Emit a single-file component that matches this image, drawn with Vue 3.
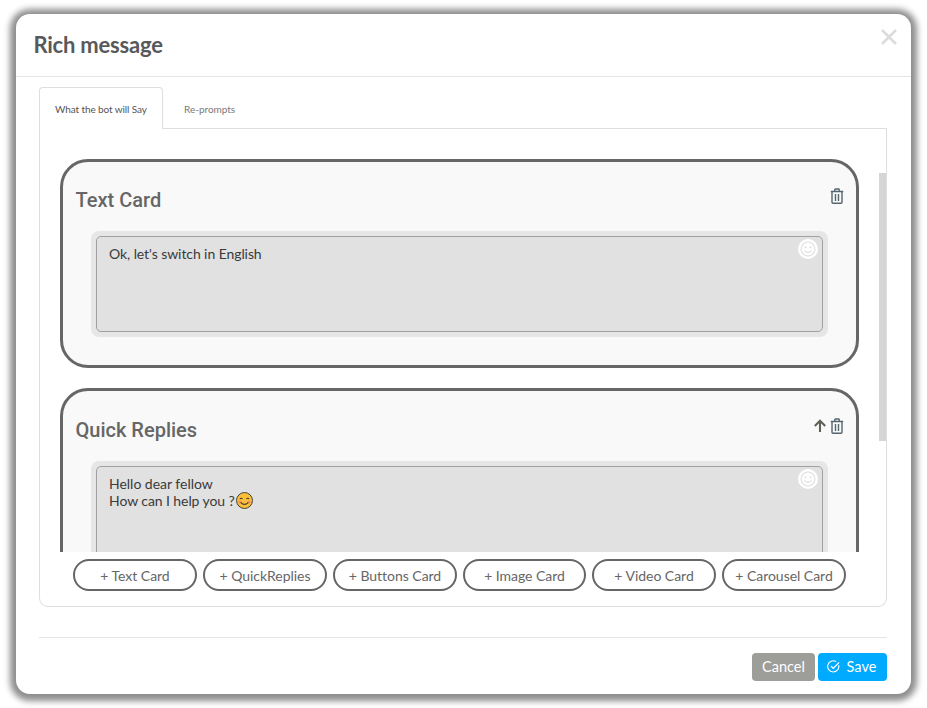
<script setup>
const cards = [
  { title: 'Text Card', lines: ["Ok, let's switch in English"], up: false, emoji: false },
  { title: 'Quick Replies', lines: ['Hello dear fellow', 'How can I help you ?'], up: true, emoji: true }
]
const addButtons = ['+ Text Card', '+ QuickReplies', '+ Buttons Card', '+ Image Card', '+ Video Card', '+ Carousel Card']
</script>

<template>
  <div class="page">
    <div class="modal">
      <header class="head">
        <h1 class="title">Rich message</h1>
        <svg class="close" viewBox="0 0 16 16" width="16" height="16"><path d="M1 1 15 15M15 1 1 15" stroke="#dcdcdc" stroke-width="2.6" fill="none"/></svg>
      </header>
      <div class="body">
        <div class="tabs">
          <div class="tab active">What the bot will Say</div>
          <div class="tab">Re-prompts</div>
        </div>
        <div class="panel">
          <div class="scroll">
            <div class="thumb"></div>
            <section v-for="c in cards" :key="c.title" class="card">
              <div class="card-head">
                <h2 class="card-title">{{ c.title }}</h2>
                <div class="card-actions">
                  <svg v-if="c.up" viewBox="0 0 14 14" width="14" height="14"><path d="M7 13V2M1.8 7 7 1.8 12.2 7" stroke="#5f6058" stroke-width="2.1" fill="none"/></svg>
                  <svg viewBox="0 0 14 16" width="14" height="16"><path d="M2 4v10.2c0 .6.4 1 1 1h8c.6 0 1-.4 1-1V4M.8 3.5h12.4M4.8 3.3V1.6c0-.4.2-.6.6-.6h3.2c.4 0 .6.2.6.6v1.7M5.5 6v7M8.5 6v7" stroke="#556570" stroke-width="1.4" fill="none"/></svg>
                </div>
              </div>
              <div class="ring">
                <div class="area">
                  <div v-for="(l, i) in c.lines" :key="i" class="line">{{ l }}<svg v-if="c.emoji && i === 1" class="emoji" viewBox="0 0 16 16" width="17" height="17"><circle cx="8" cy="8" r="7.5" fill="#fbbf3a" stroke="#3d3a33" stroke-width=".9"/><circle cx="3.6" cy="9.4" r="1.5" fill="#f3916b"/><circle cx="12.4" cy="9.4" r="1.5" fill="#f3916b"/><path d="M3.6 6.6q1.3-1.4 2.6 0M9.8 6.6q1.3-1.4 2.6 0" stroke="#3d3a33" stroke-width="1" fill="none"/><path d="M4.4 9.8q3.6 3.8 7.2 0" stroke="#3d3a33" stroke-width="1.1" fill="none"/></svg></div>
                  <span class="smile">
                    <svg viewBox="0 0 16 16" width="16" height="16"><circle cx="8" cy="8" r="7" fill="none" stroke="#dedede" stroke-width="1.1"/><circle cx="5.6" cy="6.2" r=".9" fill="#dedede"/><circle cx="10.4" cy="6.2" r=".9" fill="#dedede"/><path d="M4.4 9.6q3.6 3.6 7.2 0" stroke="#dedede" stroke-width="1.1" fill="none"/></svg>
                  </span>
                </div>
              </div>
            </section>
          </div>
          <div class="adds">
            <button v-for="b in addButtons" :key="b" class="add">{{ b }}</button>
          </div>
        </div>
        <footer class="foot">
          <button class="btn cancel">Cancel</button>
          <button class="btn save">
            <svg viewBox="0 0 14 14" width="13" height="13"><path d="M12.6 5.6A6 6 0 1 1 9.8 1.7" stroke="#fff" stroke-width="1.2" fill="none"/><path d="M4.2 6.4 6.8 9 13 2.6" stroke="#fff" stroke-width="1.4" fill="none"/></svg>
            Save
          </button>
        </footer>
      </div>
    </div>
  </div>
</template>

<style scoped>
.page {
  width: 927px;
  height: 708px;
  padding: 14px 16px;
  box-sizing: border-box;
  background: #fff;
  font-family: Lato, sans-serif;
  overflow: hidden;
}
.modal {
  width: 895px;
  height: 680px;
  background: #fff;
  border-radius: 14px;
  box-shadow: 0 1px 6px 6px #8e8e8e;
  display: flex;
  flex-direction: column;
}
.head {
  height: 63px;
  box-sizing: border-box;
  border-bottom: 1px solid #e5e5e5;
  padding: 0 14px 0 18px;
  display: flex;
  justify-content: space-between;
  flex: none;
}
.title {
  margin: 17px 0 0 -0.6px;
  font-size: 22px;
  line-height: 28px;
  font-weight: 700;
  color: #58595b;
  letter-spacing: -0.2px;
}
.close { margin-top: 15px; }
.body {
  padding: 10px 24px 0 23px;
  display: flex;
  flex-direction: column;
  flex: 1;
  min-height: 0;
}
.tabs {
  display: flex;
  height: 42px;
  border-bottom: 1px solid #dedede;
  box-sizing: border-box;
  flex: none;
}
.tab {
  height: 42px;
  box-sizing: border-box;
  padding: 14px 21px 0;
  font-size: 10px;
  line-height: 17px;
  color: #7a7a7a;
  letter-spacing: -0.02px;
}
.tab.active {
  width: 124px;
  padding-top: 13px;
  padding-left: 15px;
  padding-right: 0;
  color: #555;
  background: #fff;
  border: 1px solid #dedede;
  border-bottom: 0;
  border-radius: 4px 4px 0 0;
  letter-spacing: -0.1px;
}
.panel {
  height: 478px;
  box-sizing: border-box;
  border: 1px solid #dedede;
  border-top: 0;
  border-radius: 0 0 9px 9px;
  display: flex;
  flex-direction: column;
  flex: none;
}
.scroll {
  position: relative;
  height: 423px;
  overflow: hidden;
  padding: 30px 0 0 20px;
  box-sizing: border-box;
  flex: none;
}
.thumb {
  position: absolute;
  right: -1px;
  top: 44px;
  width: 8px;
  height: 268px;
  background: #d6d6d6;
}
.card {
  width: 799px;
  height: 209px;
  box-sizing: border-box;
  border: 3px solid #666;
  border-radius: 28px;
  background: #f9f9f9;
  padding: 0 13px 0 12.5px;
  margin-bottom: 20px;
}
.card-head {
  height: 69px;
  display: flex;
  justify-content: space-between;
  align-items: flex-start;
}
.card + .card .card-head { height: 70px; padding-top: 1px; box-sizing: border-box; }
.card-title {
  margin: 25px 0 0;
  font-family: Roboto, sans-serif;
  font-size: 20px;
  line-height: 26px;
  font-weight: 500;
  color: #666;
}
.card-actions {
  display: flex;
  gap: 3px;
  align-items: center;
  margin-top: 26px;
  margin-right: -1px;
}
.ring {
  width: 737px;
  height: 106px;
  box-sizing: border-box;
  margin-left: 15.5px;
  padding: 5px;
  background: #e6e6e6;
  border-radius: 8px;
}
.area {
  position: relative;
  height: 96px;
  box-sizing: border-box;
  border: 1px solid #a0a0a0;
  border-radius: 5px;
  background: #e1e1e1;
  padding: 8px 12px;
  font-size: 14px;
  line-height: 17px;
  color: #3a3a3a;
  letter-spacing: -0.08px;
}
.card + .card .line:first-child { letter-spacing: -0.02px; }
.card + .card .line:last-child { letter-spacing: -0.2px; }
.emoji { vertical-align: -3px; margin-left: 1px; }
.smile {
  position: absolute;
  top: 2px;
  right: 4px;
  width: 20px;
  height: 20px;
  border-radius: 50%;
  background: #fff;
  display: flex;
  align-items: center;
  justify-content: center;
}
.adds {
  display: flex;
  gap: 6px;
  padding: 7px 0 0 33px;
}
.add {
  width: 124px;
  height: 32px;
  box-sizing: border-box;
  border: 2px solid #666;
  border-radius: 16px;
  background: #fff;
  padding: 0;
  font-family: Lato, sans-serif;
  font-size: 14px;
  color: #666;
  letter-spacing: -0.03px;
}
.add:nth-child(4) { width: 123px; }
.foot {
  margin-top: 30px;
  border-top: 1px solid #e5e5e5;
  padding-top: 15px;
  display: flex;
  justify-content: flex-end;
  gap: 3px;
}
.btn {
  height: 28px;
  border: 0;
  border-radius: 4px;
  padding: 0 0 2px;
  font-family: Lato, sans-serif;
  font-size: 14.5px;
  color: #fff;
}
.cancel { width: 63px; background: #9d9d9a; }
.save {
  width: 69px;
  background: #00aaff;
  display: flex;
  align-items: center;
  justify-content: center;
  gap: 7px;
}
.save svg { margin-left: -2px; margin-top: 1px; }
</style>
